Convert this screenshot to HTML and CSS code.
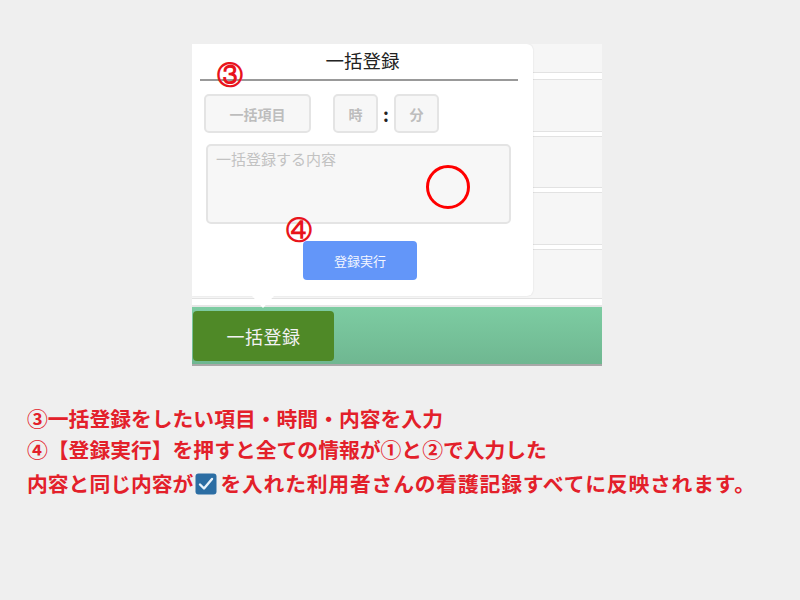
FILE: index.html
```html
<!DOCTYPE html>
<html lang="ja">
<head>
<meta charset="utf-8">
<link rel="stylesheet" href="styles.css">
</head>
<body>
<div class="page">
  <div class="shot">
    <div class="rows">
      <div class="row r1"></div>
      <div class="sep first"></div>
      <div class="row r2"></div>
      <div class="sep"></div>
      <div class="row r3"></div>
      <div class="sep"></div>
      <div class="row r4"></div>
      <div class="sep"></div>
      <div class="row r5"></div>
      <div class="sep last"></div>
      <div class="greenbar">
        <div class="bulk-btn">一括登録</div>
      </div>
      <div class="bottomline"></div>
    </div>

    <div class="popup">
      <div class="title">一括登録</div>
      <div class="rule"></div>
      <div class="fields">
        <div class="box item">一括項目</div>
        <div class="box small">時</div>
        <span class="colon">:</span>
        <div class="box small">分</div>
      </div>
      <div class="textarea">一括登録する内容</div>
      <div class="exec-wrap"><div class="exec">登録実行</div></div>
    </div>
    <div class="arrow"></div>

    <span class="num n3">③</span>
    <span class="num n4">④</span>
    <div class="circle"></div>
  </div>

  <div class="notes">
    <p>③一括登録をしたい項目・時間・内容を入力</p>
    <p>④【登録実行】を押すと全ての情報が①と②で入力した</p>
    <p class="l3">内容と同じ内容が<span class="check"><svg viewBox="0 0 22 22" width="22" height="22"><rect x="0.5" y="0.5" width="21" height="21" rx="3" fill="#2b6da3"/><path d="M5 11.5 L9 15.5 L17 6" fill="none" stroke="#e8f2fb" stroke-width="2.4" stroke-linecap="round" stroke-linejoin="round"/></svg></span><span class="wide">を入れた利用者さんの看護記録すべてに反映されます。</span></p>
  </div>
</div>
</body>
</html>
```

FILE: styles.css
```css
html, body {
  margin: 0;
  padding: 0;
  background: #efefef;
}
body {
  font-family: "Noto Sans CJK JP", "Noto Sans", sans-serif;
}
.page {
  width: 800px;
  height: 600px;
  padding-top: 44px;
  box-sizing: border-box;
}
.shot {
  position: relative;
  width: 410px;
  height: 322px;
  margin-left: 192px;
  background: #f6f6f6;
  overflow: hidden;
}
.rows {
  display: flex;
  flex-direction: column;
}
.row {
  background: #f6f6f6;
}
.r1 { height: 28px; }
.r2 { height: 51px; }
.r3 { height: 50px; }
.r4 { height: 51px; }
.r5 { height: 48px; }
.sep {
  height: 4px;
  background: #fff;
  border-top: 1px solid #e2e2e2;
  border-bottom: 1px solid #e2e2e2;
}
.sep.first {
  height: 6px;
}
.sep.last {
  height: 6px;
  border-bottom: 2px solid #e6e6e6;
}
.greenbar {
  height: 57px;
  background: linear-gradient(#7dcca2, #6fb791);
  display: flex;
  align-items: center;
  padding-left: 1px;
}
.bulk-btn {
  width: 141px;
  height: 50px;
  background: #4f8927;
  border-radius: 4px;
  color: #f2f2f2;
  font-size: 18px;
  display: flex;
  align-items: center;
  justify-content: center;
  letter-spacing: 0.5px;
}
.bottomline {
  height: 2px;
  background: #a8a8a8;
}

.popup {
  position: absolute;
  left: 0;
  top: 0;
  width: 341px;
  height: 252px;
  background: #fff;
  border-bottom-right-radius: 6px;
  border-top-right-radius: 6px;
  box-shadow: 0 0 2px rgba(0,0,0,0.12);
}
.title {
  text-align: center;
  font-size: 18.5px;
  color: #222;
  padding-top: 4px;
  line-height: 24px;
  box-sizing: border-box;
  height: 35px;
}
.rule {
  height: 2px;
  background: #999;
  margin: 0 15px 0 8px;
}
.fields {
  display: flex;
  align-items: center;
  margin-top: 13px;
  padding-left: 12px;
}
.box {
  height: 39px;
  box-sizing: border-box;
  border: 2px solid #e4e4e4;
  border-radius: 5px;
  background: #f7f7f7;
  color: #bdbdbd;
  font-size: 14px;
  font-weight: 700;
  display: flex;
  align-items: center;
  justify-content: center;
}
.box.item {
  width: 107px;
  margin-right: 22px;
}
.box.small {
  width: 45px;
}
.colon {
  width: 16px;
  text-align: center;
  font-weight: 700;
  font-size: 18px;
  color: #222;
}
.textarea {
  margin: 11px 0 0 14px;
  width: 305px;
  height: 80px;
  border: 2px solid #e4e4e4;
  border-radius: 5px;
  background: #f7f7f7;
  color: #c2c2c2;
  font-size: 15px;
  padding: 2px 0 0 8px;
  box-sizing: border-box;
}
.exec-wrap {
  margin-top: 17px;
  padding-left: 111px;
}
.exec {
  width: 114px;
  height: 39px;
  background: #6396f9;
  border-radius: 4px;
  color: #f4f7ff;
  font-size: 13px;
  display: flex;
  align-items: center;
  justify-content: center;
}
.arrow {
  position: absolute;
  left: 60px;
  top: 252px;
  width: 0;
  height: 0;
  border-left: 11px solid transparent;
  border-right: 11px solid transparent;
  border-top: 12px solid #fff;
}
.num {
  position: absolute;
  color: #e8141c;
  font-family: "Liberation Serif", "DejaVu Serif", serif;
  font-weight: 700;
  font-size: 26px;
  line-height: 26px;
}
.n3 { left: 25px; top: 19px; }
.n4 { left: 94px; top: 174px; }
.circle {
  position: absolute;
  left: 234px;
  top: 121px;
  width: 38px;
  height: 38px;
  border: 3px solid #f00;
  border-radius: 50%;
}

.notes {
  margin-top: 37px;
  padding-left: 27px;
  color: #e3202a;
  font-weight: 700;
  font-size: 20.8px;
  font-family: "Noto Sans CJK JP", sans-serif;
}
.notes p {
  margin: 0;
  height: 31px;
  line-height: 31px;
  white-space: nowrap;
}
.notes p.l3 {
  height: 36px;
  line-height: 36px;
}
.wide {
  letter-spacing: 0.8px;
}
.check {
  display: inline-block;
  vertical-align: -3px;
  width: 22px;
  height: 22px;
  margin: 0 3px 0 2px;
}
.check svg { display: block; }
```
